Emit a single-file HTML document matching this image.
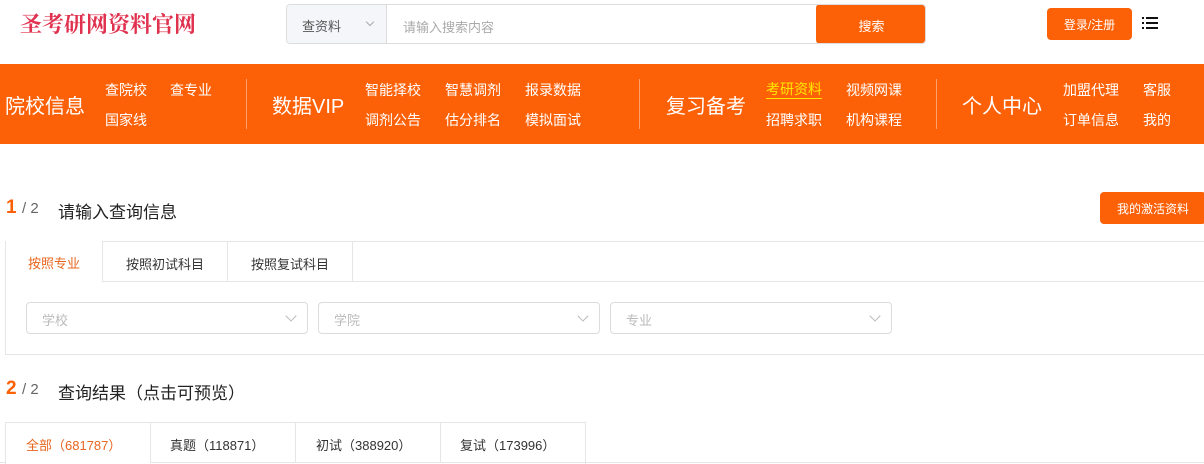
<!DOCTYPE html>
<html><head><meta charset="utf-8"><style>
*{margin:0;padding:0;box-sizing:border-box}
body{width:1204px;height:464px;overflow:hidden;background:#fff;font-family:"Liberation Sans","Noto Sans CJK SC",sans-serif;position:relative;color:#333}
.a{position:absolute;white-space:nowrap}
.logo{left:20px;top:8px;font-family:"Liberation Serif","Noto Serif CJK SC",serif;font-weight:bold;font-size:22px;color:#e0324f;letter-spacing:0px}
.search{left:286px;top:4px;width:640px;height:40px;border:1px solid #ddd;border-radius:4px;overflow:hidden}
.sel{left:0;top:0;width:100px;height:38px;background:#f5f6fa;border-right:1px solid #ddd;font-size:13px;color:#555;padding:11px 0 0 15px}
.btn{background:#fc6107;color:#fff;border-radius:4px;font-size:13px;text-align:center}
.nav{left:0;top:64px;width:1204px;height:80px;background:#fc6107}
.nav .h{font-size:20px;color:#fff;top:26px}
.nav .l{font-size:14px;color:#fff}
.sep{width:1px;height:50px;top:15px;background:#fca070}
.t1{font-size:17px;color:#222}
.num{font-size:19px;font-weight:bold;color:#fc6107}
.sl{font-size:15px;color:#666}
.box{left:5px;top:241px;width:1210px;height:114px;border:1px solid #e6e6e6}
.tab{top:-1px;height:41px;border:1px solid #e6e6e6;border-left:none;font-size:13px;color:#333;text-align:center;padding-top:12px;background:#fff}
.dd{top:60px;height:32px;border:1px solid #dcdcdc;border-radius:4px;font-size:13px;color:#bbb;padding:7px 0 0 15px}
.dd i{position:absolute;right:12px;top:9px;width:8px;height:8px;border-right:1px solid #bbb;border-bottom:1px solid #bbb;transform:rotate(45deg)}
</style></head><body>
<div class="a logo">圣考研网资料官网</div>
<div class="a search">
 <div class="a sel">查资料<span style="position:absolute;left:80px;top:14px;width:6px;height:6px;border-right:1px solid #aaa;border-bottom:1px solid #aaa;transform:rotate(45deg)"></span></div>
 <div class="a" style="left:116px;top:12px;font-size:13px;color:#aaa">请输入搜索内容</div>
 <div class="a btn" style="left:529px;top:-1px;width:111px;height:40px;padding-top:12px">搜索</div>
</div>
<div class="a btn" style="left:1047px;top:8px;width:85px;height:32px;padding-top:8px;font-size:12px">登录/注册</div>
<svg class="a" style="left:1142px;top:16px" width="20" height="16"><g fill="#111"><rect x="0" y="1" width="2" height="2"/><rect x="4" y="1" width="12" height="2"/><rect x="0" y="6" width="2" height="2"/><rect x="4" y="6" width="12" height="2"/><rect x="0" y="11" width="2" height="2"/><rect x="4" y="11" width="12" height="2"/></g></svg>
<div class="a nav">
 <div class="a h" style="left:5px">院校信息</div>
 <div class="a l" style="left:105px;top:16px">查院校</div><div class="a l" style="left:170px;top:16px">查专业</div>
 <div class="a l" style="left:105px;top:46px">国家线</div>
 <div class="a sep" style="left:246px"></div>
 <div class="a h" style="left:272px">数据VIP</div>
 <div class="a l" style="left:365px;top:16px">智能择校</div><div class="a l" style="left:445px;top:16px">智慧调剂</div><div class="a l" style="left:525px;top:16px">报录数据</div>
 <div class="a l" style="left:365px;top:46px">调剂公告</div><div class="a l" style="left:445px;top:46px">估分排名</div><div class="a l" style="left:525px;top:46px">模拟面试</div>
 <div class="a sep" style="left:639px"></div>
 <div class="a h" style="left:666px">复习备考</div>
 <div class="a l" style="left:766px;top:16px;color:#ffe600;border-bottom:1px solid #ffe600;line-height:18px">考研资料</div><div class="a l" style="left:846px;top:16px">视频网课</div>
 <div class="a l" style="left:766px;top:46px">招聘求职</div><div class="a l" style="left:846px;top:46px">机构课程</div>
 <div class="a sep" style="left:936px"></div>
 <div class="a h" style="left:962px">个人中心</div>
 <div class="a l" style="left:1063px;top:16px">加盟代理</div><div class="a l" style="left:1143px;top:16px">客服</div>
 <div class="a l" style="left:1063px;top:46px">订单信息</div><div class="a l" style="left:1143px;top:46px">我的</div>
</div>
<div class="a num" style="left:6px;top:197px">1</div><div class="a sl" style="left:22px;top:200px">/ 2</div>
<div class="a t1" style="left:58px;top:198px">请输入查询信息</div>
<div class="a btn" style="left:1100px;top:192px;width:106px;height:32px;padding-top:8px;font-size:12px">我的激活资料</div>
<div class="a box">
 <div class="a tab" style="left:0;width:96px;border:none;color:#e8651f;height:40px">按照专业</div>
 <div class="a tab" style="left:96px;width:126px;border-left:1px solid #e6e6e6">按照初试科目</div>
 <div class="a tab" style="left:222px;width:125px">按照复试科目</div>
 <div class="a" style="left:346px;top:39px;width:870px;height:1px;background:#e6e6e6"></div>
 <div class="a dd" style="left:20px;width:282px">学校<i></i></div>
 <div class="a dd" style="left:312px;width:282px">学院<i></i></div>
 <div class="a dd" style="left:604px;width:282px">专业<i></i></div>
</div>
<div class="a num" style="left:6px;top:378px">2</div><div class="a sl" style="left:22px;top:381px">/ 2</div>
<div class="a t1" style="left:58px;top:379px">查询结果（点击可预览）</div>
<div class="a" style="left:0;top:462px;width:1204px;height:1px;background:#e6e6e6"></div>
<div class="a" style="left:5px;top:422px;width:581px;height:42px;border:1px solid #e6e6e6;border-bottom:none;background:#fff"></div>
<div class="a" style="left:5px;top:422px;width:146px;height:42px;background:#fff;border-left:1px solid #e6e6e6;border-top:1px solid #e6e6e6"></div>
<div class="a" style="left:150px;top:422px;width:1px;height:41px;background:#e6e6e6"></div>
<div class="a" style="left:295px;top:422px;width:1px;height:41px;background:#e6e6e6"></div>
<div class="a" style="left:440px;top:422px;width:1px;height:41px;background:#e6e6e6"></div>
<div class="a" style="left:151px;top:462px;width:435px;height:1px;background:#e6e6e6"></div>
<div class="a" style="left:26px;top:435px;font-size:13px;color:#e8651f">全部（681787）</div>
<div class="a" style="left:170px;top:435px;font-size:13px">真题（118871）</div>
<div class="a" style="left:316px;top:435px;font-size:13px">初试（388920）</div>
<div class="a" style="left:460px;top:435px;font-size:13px">复试（173996）</div>
</body></html>
